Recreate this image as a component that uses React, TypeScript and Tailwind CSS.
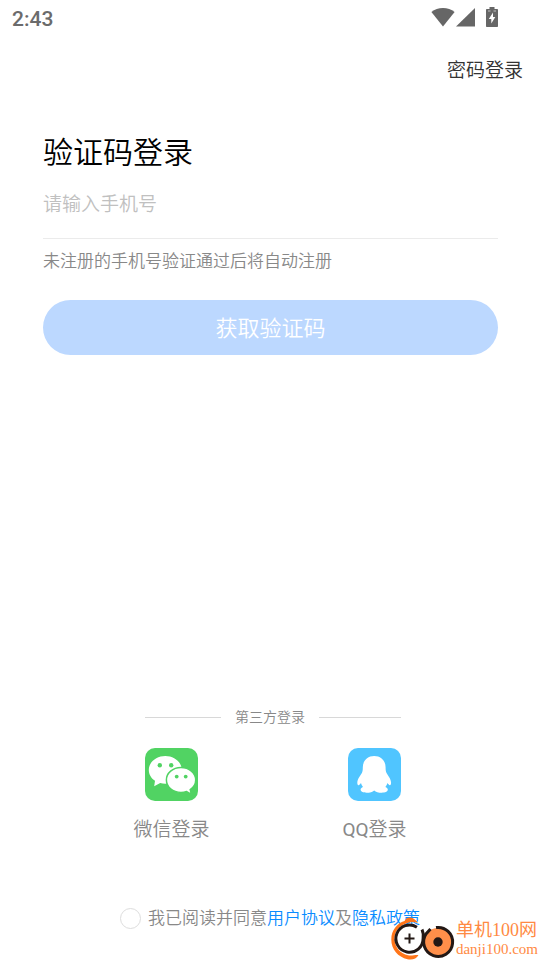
import { useState } from "react";

const LINK_CLS = "text-[#0a8cff]";

function WifiIcon() {
  return (
    <svg width="24" height="20" viewBox="0 0 24 20" fill="#666" aria-hidden="true">
      <path d="M12 19.5 0.4 5C3.6 2.4 7.6 1 12 1s8.400 1.400 11.600 4Z" />
    </svg>
  );
}

function SignalIcon() {
  return (
    <svg width="20" height="20" viewBox="0 0 20 20" fill="#666" aria-hidden="true">
      <path d="M20 1v18.500H1Z" />
    </svg>
  );
}

function BatteryIcon() {
  return (
    <svg width="12" height="20" viewBox="0 0 12 20" aria-hidden="true">
      <path fill="#666" d="M3.500 0h5v2H11c.6 0 1 .4 1 1v16c0 .6-.4 1-1 1H1c-.6 0-1-.4-1-1V3c0-.6.4-1 1-1h2.500Z" />
      <path fill="#fff" d="M7 5.500 2.800 12h2.500v4.500L9.300 10H7Z" />
      <path stroke="#fff" strokeWidth=".6" d="M2 4h2.500M7.500 4H10" />
    </svg>
  );
}

function WechatIcon() {
  return (
    <svg width="53" height="53" viewBox="0 0 53 53" aria-hidden="true">
      <rect width="53" height="53" rx="10" fill="#51d363" />
      <path fill="#fff" d="M20.300 8C11.200 8 3.800 14.200 3.800 22c0 4.400 2.400 8.200 6.200 10.800l-.8 5.400 6-3.200c1.600.5 3.300.8 5.100.8 9.100 0 16.500-6.100 16.500-13.800S29.400 8 20.300 8Z" />
      <path fill="#fff" stroke="#51d363" strokeWidth="1.500" d="M36 19.500c-8.200 0-14.600 5.500-14.600 12.400S27.800 44.400 36 44.400c2 0 3.900-.3 5.600-.9l4.800 3-1.200-5c3.400-2.300 5.500-5.700 5.500-9.600C50.700 25 44.200 19.500 36 19.500Z" />
      <g fill="#51d363">
        <circle cx="14.800" cy="17.200" r="2.200" />
        <circle cx="26.200" cy="17.200" r="2.200" />
        <circle cx="31.700" cy="28.600" r="1.900" />
        <circle cx="40.700" cy="28.600" r="1.900" />
      </g>
    </svg>
  );
}

function QQIcon() {
  return (
    <svg width="53" height="53" viewBox="0 0 53 53" aria-hidden="true">
      <rect width="53" height="53" rx="10" fill="#50c5ff" />
      <path
        fill="#fff"
        d="M26.200 8c-7 0-11.400 4.900-11.400 11.500 0 2-.1 3.500-.8 5.200-.8 2-4.700 5.800-4.700 10.100 0 1.800.6 2.600 1.300 2.400.9-.2 1.600-1.300 2.400-2.200.5 1.800 1.100 2.700 2 3.900-1.500.6-2.400 1.500-2.400 2.700 0 2.300 2.900 3.100 6 3.100 3.300 0 6-.9 7.600-2.300 1.600 1.400 4.300 2.300 7.600 2.300 3.100 0 6-.8 6-3.100 0-1.200-.9-2.100-2.400-2.700.9-1.200 1.500-2.100 2-3.900.8.900 1.500 2 2.400 2.200.7.200 1.300-.6 1.300-2.400 0-4.300-3.900-8.100-4.700-10.100-.7-1.700-.8-3.200-.8-5.200C37.600 12.900 33.200 8 26.200 8Z"
      />
    </svg>
  );
}

function SiteLogo() {
  return (
    <svg width="64" height="44" viewBox="0 0 64 44" fill="none" aria-hidden="true">
      <path fill="#ff7519" d="M27 7C22.500 5.500 19 6 15.500 7.200 7.500 10 3 16 3.500 23.500c.6 8.500 6 14 13.500 15.700 3.800.9 6.500-.6 10.500-.2-2 4-6.500 5.200-11 4.200C7 41 .3 33.500.3 23.500.3 14 6 7.500 13.500 5c1.700-3 3-3.600 5-3.600 3.500 0 6 2 8.500 5.600Z" />
      <circle cx="18.500" cy="22.500" r="14.500" fill="#fff" />
      <circle cx="47" cy="26" r="14" fill="#ff8f4a" />
      <g stroke="#231815" strokeWidth="3">
        <path d="M31 13.500c1.400 3 1.700 6 1.100 9a13.600 13.600 0 1 1-6.200-11.300" />
        <path d="M45 11.600a14.500 14.500 0 1 1-10 6.400l4.500-5" />
      </g>
      <path stroke="#231815" strokeWidth="2" d="M18.500 17.500v10M13.500 22.500h10" />
      <circle cx="47" cy="26" r="4.700" fill="#231815" />
    </svg>
  );
}

export default function App() {
  const [phone, setPhone] = useState("");
  const [agreed, setAgreed] = useState(false);

  return (
    <div className="relative flex min-h-screen flex-col bg-white font-[Roboto,'Noto_Sans_CJK_SC',sans-serif] font-[350]">
      {/* Status bar */}
      <div className="flex h-9 items-start justify-between pt-[7px] pr-[42px] pl-3">
        <span className="text-[21px] leading-6 font-medium text-[#6b6b6b]">2:43</span>
        <div className="flex items-center">
          <WifiIcon />
          <SignalIcon />
          <span className="ml-[11px]">
            <BatteryIcon />
          </span>
        </div>
      </div>

      <header className="flex justify-end px-[17px] pt-[21px]">
        <button type="button" className="text-[19px] leading-7 text-[#333]">密码登录</button>
      </header>

      <main className="flex grow flex-col pt-12 pr-[42px] pl-[43px]">
        <h1 className="text-[30px] leading-10 font-[350] text-black">验证码登录</h1>

        <form onSubmit={(e) => e.preventDefault()}>
          <input
            type="tel"
            aria-label="手机号"
            placeholder="请输入手机号"
            value={phone}
            onChange={(e) => setPhone(e.target.value)}
            className="block h-[66px] w-full border-b border-[#ebebeb] pb-[3px] text-[19px] text-[#333] outline-none placeholder:text-[#c0c0c0]"
          />
          <p className="mt-2 text-[17px] leading-7 text-[#888]">未注册的手机号验证通过后将自动注册</p>
          <button type="submit" className="mt-[25px] h-[55px] w-full rounded-full bg-[#bcd8ff] pt-[2px] text-[22px] text-white">
            获取验证码
          </button>
        </form>

        {/* Third-party login */}
        <section className="mt-auto flex flex-col items-center pl-[5px]">
          <div className="flex items-center gap-[14px] text-[14px] leading-5 text-[#888]">
            <span className="h-px w-[76px] bg-[#d8d8d8]" />
            第三方登录
            <span className="h-px w-[82px] bg-[#d8d8d8]" />
          </div>
          <div className="mt-[21px] flex gap-[123px] text-[19px] leading-7 text-[#888]">
            <button type="button" className="flex w-20 flex-col items-center gap-[15px]">
              <WechatIcon />
              微信登录
            </button>
            <button type="button" className="flex w-20 flex-col items-center gap-[15px]">
              <QQIcon />
              <span><span className="font-normal">QQ</span>登录</span>
            </button>
          </div>
        </section>
      </main>

      <footer className="flex items-center justify-center gap-[7px] pt-[60px] pb-7 text-[17px] leading-7 text-[#888]">
        <input
          id="agree"
          type="checkbox"
          checked={agreed}
          onChange={(e) => setAgreed(e.target.checked)}
          className="size-[21px] appearance-none rounded-full border border-[#ddd] checked:border-[#0a8cff] checked:bg-[#0a8cff]"
        />
        <p>
          <label htmlFor="agree">我已阅读并同意</label>
          <a href="#terms" className={LINK_CLS}>用户协议</a>及
          <a href="#privacy" className={LINK_CLS}>隐私政策</a>
        </p>
      </footer>

      {/* Site badge */}
      <div className="absolute right-[2px] bottom-0 flex items-center gap-px font-['Liberation_Serif','Noto_Sans_CJK_SC',serif] font-normal text-[#ff8a43]">
        <SiteLogo />
        <div className="flex flex-col pt-[2px]">
          <span className="text-[18px] leading-5">单机100网</span>
          <span className="text-[15px] leading-[18px]">danji100.com</span>
        </div>
      </div>
    </div>
  );
}
